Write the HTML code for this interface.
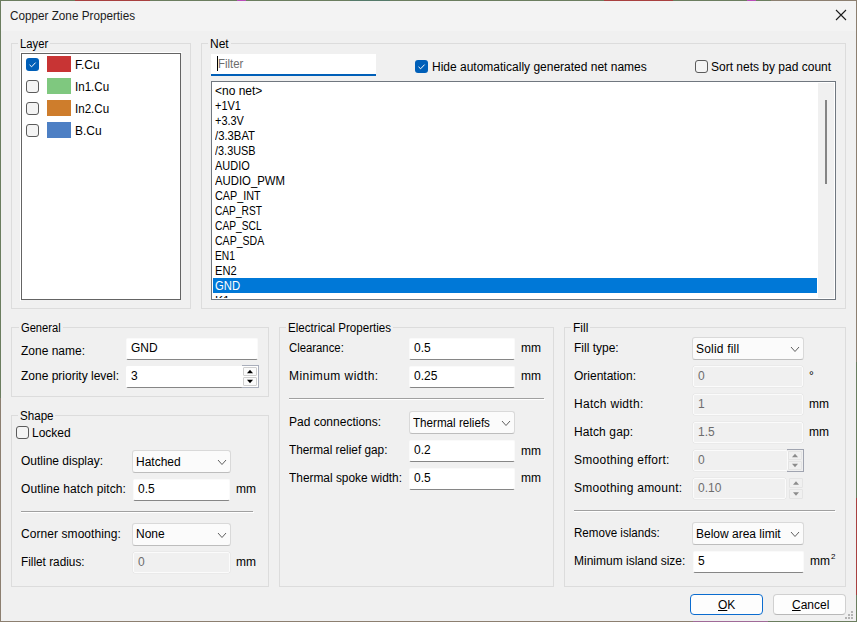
<!DOCTYPE html><html><head><meta charset="utf-8"><style>
html,body{margin:0;padding:0;}body{width:857px;height:622px;position:relative;overflow:hidden;background:#f0f0f0;font-family:"Liberation Sans",sans-serif;font-size:12px;color:#000;}
.a{position:absolute;}.t{position:absolute;line-height:14px;white-space:nowrap;}
</style></head><body>
<div class="a" style="left:1px;top:1px;width:855px;height:30px;background:#f3f3f3;"></div>
<div class="t" style="left:10px;top:9px;transform:scaleX(0.9766);transform-origin:0 0;color:#1b1b1b;">Copper Zone Properties</div>
<svg class="a" style="left:835px;top:9px" width="12" height="12"><path d="M1 1 L11 11 M11 1 L1 11" stroke="#1b1b1b" stroke-width="1.1"/></svg>
<div class="a" style="left:11px;top:43px;width:180px;height:266px;box-sizing:border-box;border:1px solid #dcdcdc;"></div>
<div class="a" style="left:18px;top:43px;width:32px;height:1px;background:#f0f0f0;"></div>
<div class="t" style="left:20px;top:37px;transform:scaleX(0.9379);transform-origin:0 0;">Layer</div>
<div class="a" style="left:20px;top:52px;width:162px;height:249px;box-sizing:border-box;border-left:1px solid #fff;border-top:1px solid #fff;"></div>
<div class="a" style="left:21px;top:53px;width:160px;height:247px;box-sizing:border-box;border:1px solid #646464;background:#fff;"></div>
<div class="a" style="left:26px;top:58px;width:13px;height:13px;border-radius:3px;background:#005fb8"></div>
<svg class="a" style="left:26px;top:58px" width="13" height="13"><path d="M3.5 6.8 L5.6 8.8 L9.6 4.6" fill="none" stroke="#fff" stroke-width="1" /></svg>
<div class="a" style="left:47px;top:56px;width:24px;height:16px;background:#c83434;"></div>
<div class="t" style="left:75px;top:58px;">F.Cu</div>
<div class="a" style="left:26px;top:80px;width:13px;height:13px;box-sizing:border-box;border-radius:3px;border:1px solid #5b5b5b;background:#f4f4f4"></div>
<div class="a" style="left:47px;top:78px;width:24px;height:16px;background:#7fc87f;"></div>
<div class="t" style="left:75px;top:80px;transform:scaleX(0.9647);transform-origin:0 0;">In1.Cu</div>
<div class="a" style="left:26px;top:102px;width:13px;height:13px;box-sizing:border-box;border-radius:3px;border:1px solid #5b5b5b;background:#f4f4f4"></div>
<div class="a" style="left:47px;top:100px;width:24px;height:16px;background:#ce7d2c;"></div>
<div class="t" style="left:75px;top:102px;transform:scaleX(0.9647);transform-origin:0 0;">In2.Cu</div>
<div class="a" style="left:26px;top:124px;width:13px;height:13px;box-sizing:border-box;border-radius:3px;border:1px solid #5b5b5b;background:#f4f4f4"></div>
<div class="a" style="left:47px;top:122px;width:24px;height:16px;background:#4d7fc4;"></div>
<div class="t" style="left:75px;top:124px;">B.Cu</div>
<div class="a" style="left:201px;top:43px;width:645px;height:266px;box-sizing:border-box;border:1px solid #dcdcdc;"></div>
<div class="a" style="left:208px;top:43px;width:23px;height:1px;background:#f0f0f0;"></div>
<div class="t" style="left:210px;top:37px;">Net</div>
<div class="a" style="left:211px;top:54px;width:165px;height:22px;background:#fff;"></div>
<div class="a" style="left:211px;top:74px;width:165px;height:2px;background:#005fb8;"></div>
<div class="a" style="left:217px;top:56px;width:1px;height:15px;background:#000;"></div>
<div class="t" style="left:218px;top:57px;transform:scaleX(0.9500);transform-origin:0 0;color:#6d6d6d;">Filter</div>
<div class="a" style="left:415px;top:60px;width:13px;height:13px;border-radius:3px;background:#005fb8"></div>
<svg class="a" style="left:415px;top:60px" width="13" height="13"><path d="M3.5 6.8 L5.6 8.8 L9.6 4.6" fill="none" stroke="#fff" stroke-width="1" /></svg>
<div class="t" style="left:432px;top:60px;">Hide automatically generated net names</div>
<div class="a" style="left:695px;top:60px;width:13px;height:13px;box-sizing:border-box;border-radius:3px;border:1px solid #5b5b5b;background:#f4f4f4"></div>
<div class="t" style="left:711px;top:60px;">Sort nets by pad count</div>
<div class="a" style="left:211px;top:81px;width:625px;height:219px;box-sizing:border-box;border:1px solid #70777f;background:#fff;"></div>
<div class="a" style="left:818px;top:83px;width:16px;height:215px;background:#f0f0f0;"></div>
<div class="a" style="left:825px;top:100px;width:2px;height:84px;background:#858585;"></div>
<div class="a" style="left:212px;top:82px;width:606px;height:216px;overflow:hidden">
<div class="t" style="left:3px;top:2px;">&lt;no net&gt;</div>
<div class="t" style="left:3px;top:17px;transform:scaleX(0.9143);transform-origin:0 0;">+1V1</div>
<div class="t" style="left:3px;top:32px;transform:scaleX(0.9125);transform-origin:0 0;">+3.3V</div>
<div class="t" style="left:3px;top:47px;transform:scaleX(0.9419);transform-origin:0 0;">/3.3BAT</div>
<div class="t" style="left:3px;top:62px;transform:scaleX(0.9091);transform-origin:0 0;">/3.3USB</div>
<div class="t" style="left:3px;top:77px;transform:scaleX(0.9132);transform-origin:0 0;">AUDIO</div>
<div class="t" style="left:3px;top:92px;transform:scaleX(0.9452);transform-origin:0 0;">AUDIO_PWM</div>
<div class="t" style="left:3px;top:107px;transform:scaleX(0.9000);transform-origin:0 0;">CAP_INT</div>
<div class="t" style="left:3px;top:122px;transform:scaleX(0.8473);transform-origin:0 0;">CAP_RST</div>
<div class="t" style="left:3px;top:137px;transform:scaleX(0.8527);transform-origin:0 0;">CAP_SCL</div>
<div class="t" style="left:3px;top:152px;transform:scaleX(0.8786);transform-origin:0 0;">CAP_SDA</div>
<div class="t" style="left:3px;top:167px;transform:scaleX(0.8545);transform-origin:0 0;">EN1</div>
<div class="t" style="left:3px;top:182px;transform:scaleX(0.9273);transform-origin:0 0;">EN2</div>
<div class="a" style="left:1px;top:196px;width:604px;height:15px;background:#0078d7"></div>
<div class="t" style="left:3px;top:197px;color:#fff;transform:scaleX(0.94);transform-origin:0 0">GND</div>
<div class="t" style="left:3px;top:212px;">K1</div>
</div>
<div class="a" style="left:11px;top:327px;width:258px;height:70px;box-sizing:border-box;border:1px solid #dcdcdc;"></div>
<div class="a" style="left:19px;top:327px;width:44px;height:1px;background:#f0f0f0;"></div>
<div class="t" style="left:21px;top:321px;transform:scaleX(0.9286);transform-origin:0 0;">General</div>
<div class="t" style="left:21px;top:344px;">Zone name:</div>
<div class="a" style="left:126px;top:338px;width:132px;height:22px;box-sizing:border-box;background:#fff;border:1px solid #fafafa;border-bottom:1px solid #868686;border-radius:2px;"></div>
<div class="t" style="left:131px;top:341px;">GND</div>
<div class="t" style="left:21px;top:369px;">Zone priority level:</div>
<div class="a" style="left:126px;top:366px;width:117px;height:22px;box-sizing:border-box;background:#fff;border:1px solid #fafafa;border-bottom:1px solid #868686;border-radius:2px;"></div>
<div class="a" style="left:126px;top:366px;width:118px;height:21px;background:#fff;border-radius:2px 0 0 0"></div>
<div class="t" style="left:131px;top:369px;">3</div>
<div class="a" style="left:242px;top:365px;width:17px;height:23px;box-sizing:border-box;border-top:1px solid #a9aebb;border-right:1px solid #a9aebb;border-bottom:1px solid #a9aebb;background:#fff;"></div>
<div class="a" style="left:243px;top:367px;width:14px;height:9px;box-sizing:border-box;background:#fbfbfb;border:1px solid #cfcfcf;border-radius:1px;"></div>
<svg class="a" style="left:0;top:0;overflow:visible" width="1" height="1"><path d="M247.0 373.3 L250.0 369.7 L253.0 373.3 Z" fill="#000"/></svg>
<div class="a" style="left:243px;top:377px;width:14px;height:9px;box-sizing:border-box;background:#fbfbfb;border:1px solid #cfcfcf;border-radius:1px;"></div>
<svg class="a" style="left:0;top:0;overflow:visible" width="1" height="1"><path d="M247.0 379.7 L250.0 383.3 L253.0 379.7 Z" fill="#000"/></svg>
<div class="a" style="left:11px;top:415px;width:258px;height:172px;box-sizing:border-box;border:1px solid #dcdcdc;"></div>
<div class="a" style="left:18px;top:415px;width:37px;height:1px;background:#f0f0f0;"></div>
<div class="t" style="left:20px;top:409px;transform:scaleX(0.9667);transform-origin:0 0;">Shape</div>
<div class="a" style="left:16px;top:426px;width:13px;height:13px;box-sizing:border-box;border-radius:3px;border:1px solid #5b5b5b;background:#f4f4f4"></div>
<div class="t" style="left:32px;top:426px;">Locked</div>
<div class="t" style="left:21px;top:454px;">Outline display:</div>
<div class="a" style="left:132px;top:450px;width:99px;height:23px;box-sizing:border-box;background:#fbfbfb;border:1px solid #d9d9d9;border-bottom-color:#bdbdbd;border-radius:3px;"></div>
<div class="t" style="left:136px;top:455px;">Hatched</div>
<svg class="a" style="left:216.5px;top:458.75px" width="10" height="6.5"><path d="M1 1 L5.0 5.5 L9 1" fill="none" stroke="#5f5f5f" stroke-width="1"/></svg>
<div class="t" style="left:21px;top:482px;letter-spacing:0.116px;">Outline hatch pitch:</div>
<div class="a" style="left:133px;top:479px;width:97px;height:22px;box-sizing:border-box;background:#fff;border:1px solid #fafafa;border-bottom:1px solid #868686;border-radius:2px;"></div>
<div class="t" style="left:138px;top:482px;">0.5</div>
<div class="t" style="left:236px;top:482px;">mm</div>
<div class="a" style="left:21px;top:511px;width:232px;height:1px;background:#a0a0a0;"></div>
<div class="a" style="left:21px;top:512px;width:233px;height:1px;background:#ffffff;"></div>
<div class="t" style="left:21px;top:527px;letter-spacing:0.069px;">Corner smoothing:</div>
<div class="a" style="left:132px;top:523px;width:99px;height:23px;box-sizing:border-box;background:#fbfbfb;border:1px solid #d9d9d9;border-bottom-color:#bdbdbd;border-radius:3px;"></div>
<div class="t" style="left:136px;top:527px;">None</div>
<svg class="a" style="left:216.5px;top:531.75px" width="10" height="6.5"><path d="M1 1 L5.0 5.5 L9 1" fill="none" stroke="#5f5f5f" stroke-width="1"/></svg>
<div class="t" style="left:21px;top:555px;transform:scaleX(0.9825);transform-origin:0 0;">Fillet radius:</div>
<div class="a" style="left:133px;top:552px;width:97px;height:21px;box-sizing:border-box;background:#f0f0f0;border:1px solid #fbfbfb;border-radius:2px;box-shadow:0 0 0 0.5px #e4e4e4;"></div>
<div class="t" style="left:138px;top:555px;color:#6d6d6d;">0</div>
<div class="t" style="left:236px;top:555px;">mm</div>
<div class="a" style="left:279px;top:327px;width:275px;height:260px;box-sizing:border-box;border:1px solid #dcdcdc;"></div>
<div class="a" style="left:286px;top:327px;width:107px;height:1px;background:#f0f0f0;"></div>
<div class="t" style="left:288px;top:321px;transform:scaleX(0.9660);transform-origin:0 0;">Electrical Properties</div>
<div class="t" style="left:289px;top:341px;transform:scaleX(0.9439);transform-origin:0 0;">Clearance:</div>
<div class="a" style="left:409px;top:338px;width:106px;height:22px;box-sizing:border-box;background:#fff;border:1px solid #fafafa;border-bottom:1px solid #868686;border-radius:2px;"></div>
<div class="t" style="left:414px;top:341px;">0.5</div>
<div class="t" style="left:521px;top:341px;">mm</div>
<div class="t" style="left:289px;top:369px;letter-spacing:0.446px;">Minimum width:</div>
<div class="a" style="left:409px;top:366px;width:106px;height:22px;box-sizing:border-box;background:#fff;border:1px solid #fafafa;border-bottom:1px solid #868686;border-radius:2px;"></div>
<div class="t" style="left:414px;top:369px;">0.25</div>
<div class="t" style="left:521px;top:369px;">mm</div>
<div class="a" style="left:289px;top:398px;width:255px;height:1px;background:#a0a0a0;"></div>
<div class="a" style="left:289px;top:399px;width:256px;height:1px;background:#ffffff;"></div>
<div class="t" style="left:289px;top:415px;">Pad connections:</div>
<div class="a" style="left:409px;top:411px;width:106px;height:23px;box-sizing:border-box;background:#fbfbfb;border:1px solid #d9d9d9;border-bottom-color:#bdbdbd;border-radius:3px;"></div>
<div class="t" style="left:413px;top:416px;transform:scaleX(0.9696);transform-origin:0 0;">Thermal reliefs</div>
<svg class="a" style="left:500.5px;top:419.75px" width="10" height="6.5"><path d="M1 1 L5.0 5.5 L9 1" fill="none" stroke="#5f5f5f" stroke-width="1"/></svg>
<div class="t" style="left:289px;top:443px;transform:scaleX(0.9838);transform-origin:0 0;">Thermal relief gap:</div>
<div class="a" style="left:409px;top:440px;width:106px;height:22px;box-sizing:border-box;background:#fff;border:1px solid #fafafa;border-bottom:1px solid #868686;border-radius:2px;"></div>
<div class="t" style="left:414px;top:443px;">0.2</div>
<div class="t" style="left:521px;top:444px;">mm</div>
<div class="t" style="left:289px;top:471px;transform:scaleX(0.9912);transform-origin:0 0;">Thermal spoke width:</div>
<div class="a" style="left:409px;top:468px;width:106px;height:22px;box-sizing:border-box;background:#fff;border:1px solid #fafafa;border-bottom:1px solid #868686;border-radius:2px;"></div>
<div class="t" style="left:414px;top:471px;">0.5</div>
<div class="t" style="left:521px;top:471px;">mm</div>
<div class="a" style="left:564px;top:327px;width:282px;height:260px;box-sizing:border-box;border:1px solid #dcdcdc;"></div>
<div class="a" style="left:571px;top:327px;width:19px;height:1px;background:#f0f0f0;"></div>
<div class="t" style="left:573px;top:321px;">Fill</div>
<div class="t" style="left:574px;top:341px;">Fill type:</div>
<div class="a" style="left:692px;top:337px;width:112px;height:23px;box-sizing:border-box;background:#fbfbfb;border:1px solid #d9d9d9;border-bottom-color:#bdbdbd;border-radius:3px;"></div>
<div class="t" style="left:696px;top:342px;letter-spacing:0.200px;">Solid fill</div>
<svg class="a" style="left:789.5px;top:345.75px" width="10" height="6.5"><path d="M1 1 L5.0 5.5 L9 1" fill="none" stroke="#5f5f5f" stroke-width="1"/></svg>
<div class="t" style="left:574px;top:369px;">Orientation:</div>
<div class="a" style="left:693px;top:366px;width:110px;height:21px;box-sizing:border-box;background:#f0f0f0;border:1px solid #fbfbfb;border-radius:2px;box-shadow:0 0 0 0.5px #e4e4e4;"></div>
<div class="t" style="left:698px;top:369px;color:#6d6d6d;">0</div>
<div class="t" style="left:809px;top:369px;">°</div>
<div class="t" style="left:574px;top:397px;letter-spacing:0.291px;">Hatch width:</div>
<div class="a" style="left:693px;top:394px;width:110px;height:21px;box-sizing:border-box;background:#f0f0f0;border:1px solid #fbfbfb;border-radius:2px;box-shadow:0 0 0 0.5px #e4e4e4;"></div>
<div class="t" style="left:698px;top:397px;color:#6d6d6d;">1</div>
<div class="t" style="left:809px;top:397px;">mm</div>
<div class="t" style="left:574px;top:425px;letter-spacing:0.111px;">Hatch gap:</div>
<div class="a" style="left:693px;top:422px;width:110px;height:21px;box-sizing:border-box;background:#f0f0f0;border:1px solid #fbfbfb;border-radius:2px;box-shadow:0 0 0 0.5px #e4e4e4;"></div>
<div class="t" style="left:698px;top:425px;color:#6d6d6d;">1.5</div>
<div class="t" style="left:809px;top:425px;">mm</div>
<div class="t" style="left:574px;top:453px;letter-spacing:0.263px;">Smoothing effort:</div>
<div class="a" style="left:693px;top:450px;width:95px;height:21px;box-sizing:border-box;background:#f0f0f0;border:1px solid #fbfbfb;border-radius:2px;box-shadow:0 0 0 0.5px #e4e4e4;"></div>
<div class="t" style="left:698px;top:453px;color:#6d6d6d;">0</div>
<div class="a" style="left:787px;top:449px;width:17px;height:23px;box-sizing:border-box;border-top:1px solid #a0a4b0;border-right:1px solid #a0a4b0;border-bottom:1px solid #a0a4b0;"></div>
<div class="a" style="left:788px;top:451px;width:14px;height:9px;box-sizing:border-box;background:#f0f0f0;border:1px solid #e4e4e4;border-radius:1px;"></div>
<svg class="a" style="left:0;top:0;overflow:visible" width="1" height="1"><path d="M792.0 457.3 L795.0 453.7 L798.0 457.3 Z" fill="#8c8c8c"/></svg>
<div class="a" style="left:788px;top:461px;width:14px;height:9px;box-sizing:border-box;background:#f0f0f0;border:1px solid #e4e4e4;border-radius:1px;"></div>
<svg class="a" style="left:0;top:0;overflow:visible" width="1" height="1"><path d="M792.0 463.7 L795.0 467.3 L798.0 463.7 Z" fill="#8c8c8c"/></svg>
<div class="t" style="left:574px;top:481px;letter-spacing:0.250px;">Smoothing amount:</div>
<div class="a" style="left:693px;top:478px;width:93px;height:21px;box-sizing:border-box;background:#f0f0f0;border:1px solid #fbfbfb;border-radius:2px;box-shadow:0 0 0 0.5px #e4e4e4;"></div>
<div class="t" style="left:698px;top:481px;color:#6d6d6d;">0.10</div>
<div class="a" style="left:789px;top:478px;width:14px;height:10px;box-sizing:border-box;background:#f0f0f0;border:1px solid #e4e4e4;border-radius:1px;"></div>
<svg class="a" style="left:0;top:0;overflow:visible" width="1" height="1"><path d="M793.0 484.8 L796.0 481.2 L799.0 484.8 Z" fill="#8c8c8c"/></svg>
<div class="a" style="left:789px;top:489px;width:14px;height:10px;box-sizing:border-box;background:#f0f0f0;border:1px solid #e4e4e4;border-radius:1px;"></div>
<svg class="a" style="left:0;top:0;overflow:visible" width="1" height="1"><path d="M793.0 492.2 L796.0 495.8 L799.0 492.2 Z" fill="#8c8c8c"/></svg>
<div class="a" style="left:574px;top:510px;width:261px;height:1px;background:#a0a0a0;"></div>
<div class="a" style="left:574px;top:511px;width:262px;height:1px;background:#ffffff;"></div>
<div class="t" style="left:574px;top:526px;transform:scaleX(0.9655);transform-origin:0 0;">Remove islands:</div>
<div class="a" style="left:692px;top:522px;width:112px;height:23px;box-sizing:border-box;background:#fbfbfb;border:1px solid #d9d9d9;border-bottom-color:#bdbdbd;border-radius:3px;"></div>
<div class="t" style="left:696px;top:527px;">Below area limit</div>
<svg class="a" style="left:789.5px;top:530.75px" width="10" height="6.5"><path d="M1 1 L5.0 5.5 L9 1" fill="none" stroke="#5f5f5f" stroke-width="1"/></svg>
<div class="t" style="left:574px;top:554px;">Minimum island size:</div>
<div class="a" style="left:693px;top:551px;width:111px;height:22px;box-sizing:border-box;background:#fff;border:1px solid #fafafa;border-bottom:1px solid #868686;border-radius:2px;"></div>
<div class="t" style="left:698px;top:554px;">5</div>
<div class="t" style="left:810px;top:554px;">mm</div>
<div class="t" style="left:831px;top:552px;font-size:8px;line-height:10px">2</div>
<div class="a" style="left:690px;top:594px;width:73px;height:21px;box-sizing:border-box;background:#fdfdfd;border:1px solid #0b6ccf;border-radius:4px;"></div>
<div class="t" style="left:718px;top:598px;"><u>O</u>K</div>
<div class="a" style="left:773px;top:594px;width:73px;height:21px;box-sizing:border-box;background:#fdfdfd;border:1px solid #d0d0d0;border-bottom-color:#b8b8b8;border-radius:4px;"></div>
<div class="t" style="left:792px;top:598px;"><u>C</u>ancel</div>
<div class="a" style="left:0px;top:0px;width:75px;height:1px;background:#6b7d5f;"></div>
<div class="a" style="left:75px;top:0px;width:75px;height:1px;background:#a8403f;"></div>
<div class="a" style="left:150px;top:0px;width:87px;height:1px;background:#6b7d5f;"></div>
<div class="a" style="left:237px;top:0px;width:9px;height:1px;background:#b94db9;"></div>
<div class="a" style="left:246px;top:0px;width:104px;height:1px;background:#6b7d5f;"></div>
<div class="a" style="left:350px;top:0px;width:40px;height:1px;background:#557a6a;"></div>
<div class="a" style="left:390px;top:0px;width:214px;height:1px;background:#6b7d5f;"></div>
<div class="a" style="left:604px;top:0px;width:69px;height:1px;background:#a8403f;"></div>
<div class="a" style="left:673px;top:0px;width:74px;height:1px;background:#6b7d5f;"></div>
<div class="a" style="left:747px;top:0px;width:9px;height:1px;background:#b94db9;"></div>
<div class="a" style="left:756px;top:0px;width:15px;height:1px;background:#6b7d5f;"></div>
<div class="a" style="left:771px;top:0px;width:86px;height:1px;background:#8c7f70;"></div>
<div class="a" style="left:0px;top:0px;width:1px;height:398px;background:#6b7d5f;"></div>
<div class="a" style="left:0px;top:398px;width:1px;height:224px;background:#8c7f70;"></div>
<div class="a" style="left:856px;top:0px;width:1px;height:362px;background:#8c7f70;"></div>
<div class="a" style="left:856px;top:362px;width:1px;height:136px;background:#6b7d5f;"></div>
<div class="a" style="left:856px;top:498px;width:1px;height:97px;background:#a8403f;"></div>
<div class="a" style="left:856px;top:595px;width:1px;height:27px;background:#6b7d5f;"></div>
<div class="a" style="left:0px;top:621px;width:693px;height:1px;background:#8c7f70;"></div>
<div class="a" style="left:693px;top:621px;width:75px;height:1px;background:#a06a98;"></div>
<div class="a" style="left:768px;top:621px;width:89px;height:1px;background:#6b7d5f;"></div>
<div class="a" style="left:851px;top:611px;width:2px;height:2px;background:#b4b4b4;"></div>
<div class="a" style="left:848px;top:614px;width:2px;height:2px;background:#b4b4b4;"></div>
<div class="a" style="left:851px;top:614px;width:2px;height:2px;background:#b4b4b4;"></div>
<div class="a" style="left:845px;top:617px;width:2px;height:2px;background:#b4b4b4;"></div>
<div class="a" style="left:848px;top:617px;width:2px;height:2px;background:#b4b4b4;"></div>
<div class="a" style="left:851px;top:617px;width:2px;height:2px;background:#b4b4b4;"></div>
</body></html>
